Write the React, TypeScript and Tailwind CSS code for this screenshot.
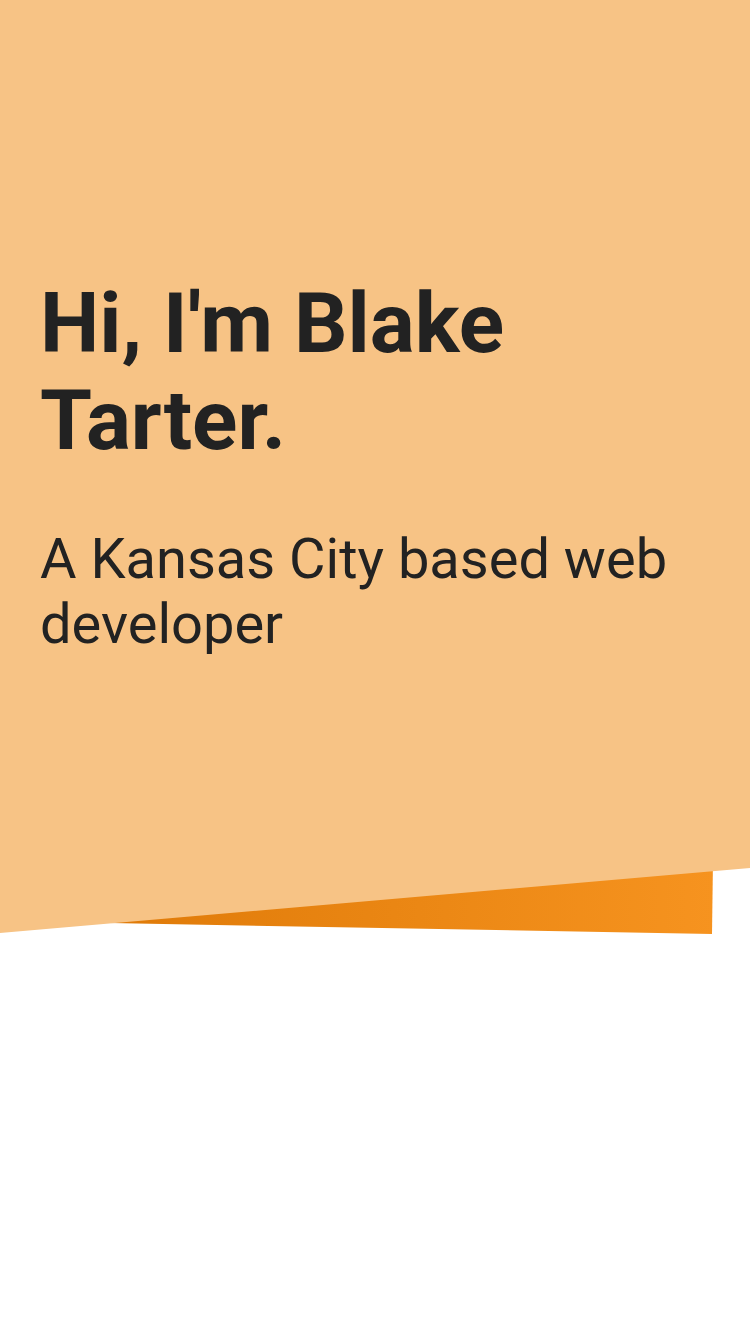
import React from "react";

export default function App() {
  return (
    <div className="relative w-[750px] h-[1334px] bg-white overflow-hidden" style={{ fontFamily: "Roboto, 'Noto Sans', sans-serif" }}>
      <svg className="absolute left-0 top-0" width="750" height="1334" viewBox="0 0 750 1334">
        <defs>
          <linearGradient id="og" x1="0" y1="0" x2="1" y2="0">
            <stop offset="0" stopColor="#df7a08" />
            <stop offset="1" stopColor="#f6931f" />
          </linearGradient>
        </defs>
        <polygon points="100,900 713,860 712,934 110,923" fill="url(#og)" />
      </svg>
      <section className="relative h-[933px] bg-[#f7c385] [clip-path:polygon(0_0,100%_0,100%_868px,0_100%)] px-[40px] pt-[275px] text-[#222222]">
        <h1 className="text-[84px] leading-[97px] font-bold">Hi, I'm Blake Tarter.</h1>
        <p className="mt-[58px] text-[56px] leading-[65px] font-normal">A Kansas City based web developer</p>
      </section>
    </div>
  );
}
